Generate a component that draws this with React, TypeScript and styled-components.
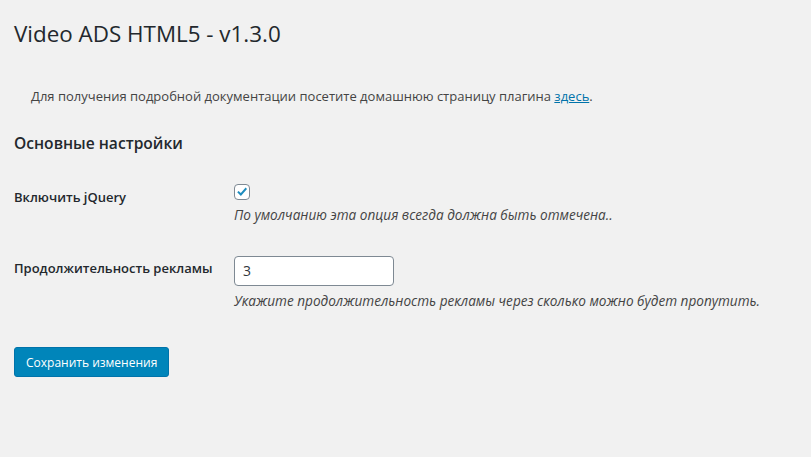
import React from "react";
import styled, { createGlobalStyle } from "styled-components";

const Global = createGlobalStyle`
  html, body { margin: 0; padding: 0; background: #f1f1f1; }
  body {
    font-family: "Open Sans", "Noto Sans", sans-serif;
    font-size: 13px;
    color: #444;
    line-height: 1.4em;
  }
`;

const Wrap = styled.div`
  padding: 10px 20px 20px 14px;
`;

const Title = styled.h1`
  margin: 0;
  padding: 9px 0 4px;
  font-size: 22.4px;
  font-weight: 400;
  line-height: 29px;
  color: #23282d;
`;

const Intro = styled.p`
  margin: 35px 0 0 17px;
  font-size: 13px;
  line-height: 1.5;
  color: #444;
`;

const Link = styled.a`
  color: #0073aa;
  text-decoration: underline;
`;

const SectionTitle = styled.h2`
  margin: 26px 0 0;
  font-size: 15.6px;
  font-weight: 600;
  line-height: 1.3;
  color: #23282d;
`;

const Form = styled.div`
  display: grid;
  grid-template-columns: 220px 1fr;
  margin-top: 31px;
  row-gap: 32px;
`;

const Label = styled.div<{ $top: number }>`
  font-size: 13px;
  font-weight: 600;
  color: #23282d;
  line-height: 1.3;
  padding-top: ${(p) => p.$top}px;
`;

const Field = styled.div`
  display: flex;
  flex-direction: column;
  align-items: flex-start;
`;

const Desc = styled.p`
  margin: 6px 0 0;
  font-style: italic;
  font-size: 13.6px;
  color: #444;
`;

const Check = styled.span`
  box-sizing: border-box;
  width: 16px;
  height: 16px;
  border: 1px solid #7e8993;
  border-radius: 4px;
  background: #fff;
  display: flex;
  align-items: center;
  justify-content: center;
`;

const Input = styled.input`
  box-sizing: border-box;
  width: 160px;
  height: 30px;
  border: 1px solid #7e8993;
  border-radius: 4px;
  background: #fff;
  padding: 0 8px;
  font-family: inherit;
  font-size: 14px;
  color: #32373c;
  outline: none;
`;

const Button = styled.button`
  margin-top: 37px;
  height: 30px;
  padding: 0 11px;
  background: #0085ba;
  border: 1px solid #0073aa;
  border-radius: 3px;
  color: #fff;
  font-family: inherit;
  font-size: 12px;
  cursor: pointer;
`;

export default function App() {
  return (
    <>
      <Global />
      <Wrap>
        <Title>Video ADS HTML5 - v1.3.0</Title>
        <Intro>
          Для получения подробной документации посетите домашнюю страницу плагина <Link href="#">здесь</Link>.
        </Intro>
        <SectionTitle>Основные настройки</SectionTitle>
        <Form>
          <Label $top={5}>Включить jQuery</Label>
          <Field>
            <Check>
              <svg width="12" height="12" viewBox="0 0 12 12">
                <path d="M1.2 6.3 L2.6 4.9 L4.8 7.1 L9.6 1.6 L11 2.9 L4.9 9.9 Z" fill="#1e8cbe" />
              </svg>
            </Check>
            <Desc>По умолчанию эта опция всегда должна быть отмечена..</Desc>
          </Field>
          <Label $top={4}>Продолжительность рекламы</Label>
          <Field>
            <Input defaultValue="3" />
            <Desc>Укажите продолжительность рекламы через сколько можно будет пропутить.</Desc>
          </Field>
        </Form>
        <Button>Сохранить изменения</Button>
      </Wrap>
    </>
  );
}
